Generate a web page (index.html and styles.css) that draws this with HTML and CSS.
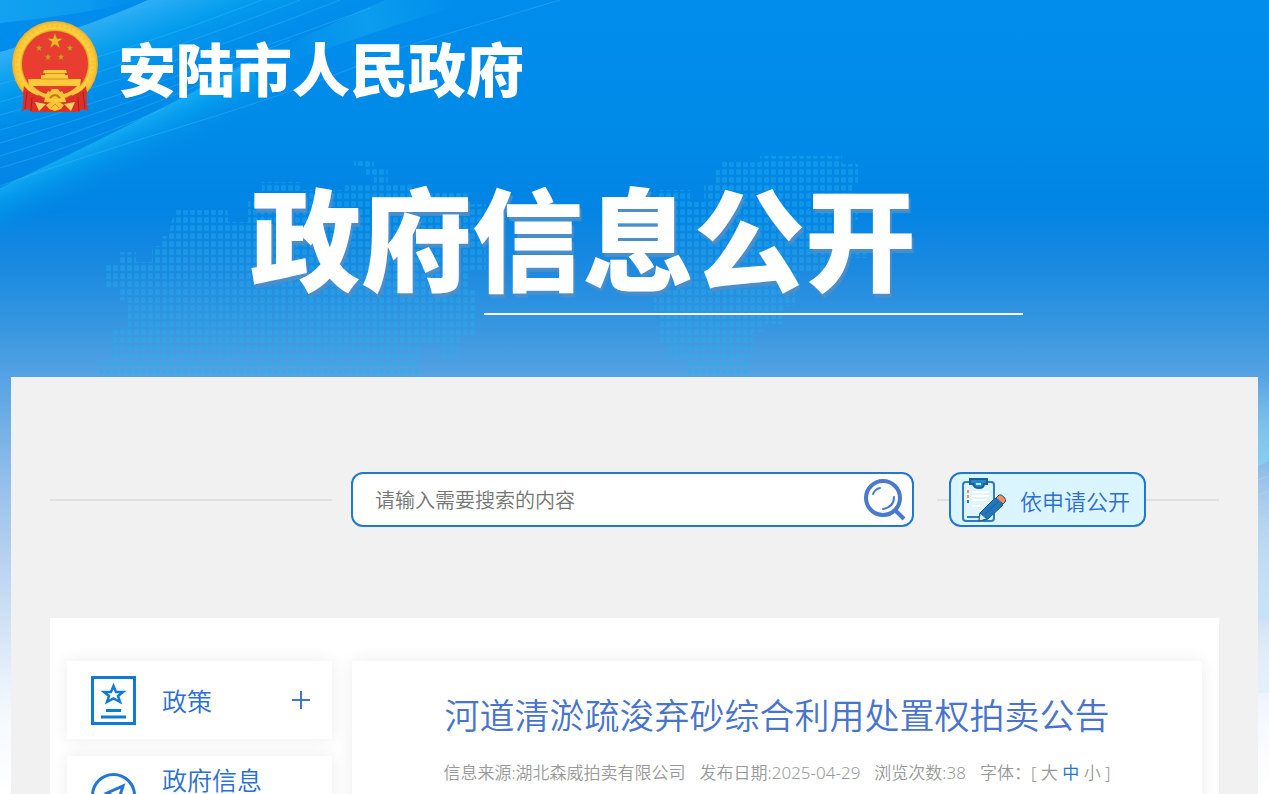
FILE: index.html
```html
<!DOCTYPE html>
<html lang="zh-CN">
<head>
    <meta charset="UTF-8">
    <meta name="viewport" content="width=device-width, initial-scale=1.0">
    <title>河道清淤疏浚弃砂综合利用处置权拍卖公告</title>
    <link rel="stylesheet" href="styles.css">
</head>
<body>
    <!-- Page background: light bands and dotted map -->
    <svg class="page-bg" viewBox="0 0 1269 794" preserveAspectRatio="xMidYMin slice" aria-hidden="true">
        <defs>
            <linearGradient id="wedge" x1="0" y1="0" x2="1" y2="0">
                <stop offset="0" stop-color="#12a2f0"/>
                <stop offset=".6" stop-color="#10a0f0" stop-opacity=".7"/>
                <stop offset="1" stop-color="#0890ee" stop-opacity="0"/>
            </linearGradient>
            <linearGradient id="band" gradientUnits="userSpaceOnUse" x1="95" y1="18" x2="128" y2="108">
                <stop offset="0" stop-color="#34b2f5" stop-opacity=".95"/>
                <stop offset=".4" stop-color="#04a0ee" stop-opacity=".8"/>
                <stop offset="1" stop-color="#0088e8" stop-opacity=".1"/>
            </linearGradient>
            <linearGradient id="edge" gradientUnits="userSpaceOnUse" x1="100" y1="136" x2="122" y2="182">
                <stop offset="0" stop-color="#18b0f4" stop-opacity=".9"/>
                <stop offset=".4" stop-color="#04a0ee" stop-opacity=".6"/>
                <stop offset="1" stop-color="#0488e6" stop-opacity="0"/>
            </linearGradient>
            <linearGradient id="edgeTop" gradientUnits="userSpaceOnUse" x1="280" y1="60" x2="460" y2="0">
                <stop offset="0" stop-color="#10a4f0" stop-opacity="0"/>
                <stop offset=".5" stop-color="#10a4f0" stop-opacity=".7"/>
                <stop offset="1" stop-color="#10a4f0" stop-opacity="0"/>
            </linearGradient>
            <linearGradient id="side1" x1="0" y1="0" x2="0" y2="1">
                <stop offset="0" stop-color="#86ceef" stop-opacity="0"/>
                <stop offset="1" stop-color="#86ceef"/>
            </linearGradient>
            <linearGradient id="side2" x1="0" y1="0" x2="0" y2="1">
                <stop offset="0" stop-color="#c6e2f4" stop-opacity="0"/>
                <stop offset="1" stop-color="#c6e2f4"/>
            </linearGradient>
            <linearGradient id="side3" x1="0" y1="0" x2="0" y2="1">
                <stop offset="0" stop-color="#e2f0f8" stop-opacity="0"/>
                <stop offset="1" stop-color="#e2f0f8"/>
            </linearGradient>
            <pattern id="dots" width="7" height="8" patternUnits="userSpaceOnUse">
                <rect x="1" y="1" width="5" height="6" rx="2" fill="#25b0ec"/>
            </pattern>
        </defs>
        <path d="M0 0H145Q75 16 0 23Z" fill="url(#wedge)"/>
        <path d="M0 52Q85 28 148 0H395Q330 24 250 62Q130 126 0 187Z" fill="url(#band)"/>
        <path d="M0 188Q130 126 250 62L280 130Q120 170 0 250Z" fill="url(#edge)"/>
        <path d="M240 67Q330 24 385 0H480Q400 22 290 62Z" fill="url(#edgeTop)"/>
        <g fill="none" stroke="#5cc4f8" stroke-opacity=".3">
            <path d="M0 84Q130 52 262 0"/>
            <path d="M0 102Q140 62 300 0"/>
            <path d="M0 115Q150 74 340 0"/>
            <path d="M0 130Q160 86 370 8"/>
            <path d="M0 143Q150 100 290 40"/>
            <path d="M0 156Q130 118 250 62"/>
            <path d="M0 168Q90 142 165 108"/>
            <path d="M0 186Q60 164 190 124T400 48L560 0"/>
        </g>
        <g fill="url(#dots)" opacity=".4">
            <path d="M175 210H228V222H248V200H262V182H300V190H345V184H410L422 192H470V204H486V270H470V290H476V336H460V360H440V344H422V376H98V360H112V328H128V300H120V288H106V264H120V252H136V262H152V246H160V236H168Z"/>
            <path d="M354 160H374V168H388V184H374V176H366V166H354Z"/>
            <path d="M760 156H842V164H858V184H852V200H858V220H850V250H868V258H838V272H800V290H795V306H785V324H765V332H753V360H748V376H687V362H668V344H660V312H654V290H676V216H658V190H690V202H704V184H716V170H722V162H760Z"/>
        </g>
        <!-- Right edge -->
        <path d="M1258 377H1269V461L1258 466Z" fill="url(#side1)"/>
        <path d="M1258 466L1269 461V618L1258 621Z" fill="url(#side2)"/>
        <path d="M1258 621L1269 618V693H1258Z" fill="url(#side3)"/>
        <path d="M1258 480L1269 476M1258 495L1269 491M1258 508L1269 504M1258 522L1269 518M1258 538L1269 534" stroke="#b5d6f0" stroke-opacity=".6"/>
    </svg>

    <!-- Header -->
    <header class="header">
        <a class="brand" href="#">
            <svg class="emblem" viewBox="0 0 86 92" aria-hidden="true">
                <defs>
                    <radialGradient id="gold" cx=".5" cy=".5" r=".5">
                        <stop offset=".76" stop-color="#d99a1c"/>
                        <stop offset=".82" stop-color="#ffd23f"/>
                        <stop offset=".93" stop-color="#fbc735"/>
                        <stop offset="1" stop-color="#e9a826"/>
                    </radialGradient>
                    <path id="star" d="M0-8L2-2.5 8-2.5 3 1 5 7 0 3.4-5 7-3 1-8-2.5-2-2.5Z"/>
                </defs>
                <ellipse cx="43" cy="43" rx="43" ry="43" fill="url(#gold)"/>
                <circle cx="43" cy="43" r="38" fill="none" stroke="#e8a428" stroke-width="3" stroke-dasharray="2 3" opacity=".25"/>
                <circle cx="43" cy="43" r="33" fill="#e93d31"/>
                <use href="#star" transform="translate(43 20)" fill="#efb62d" stroke="#b96b17" stroke-width=".6"/>
                <g fill="#d59822" stroke="#a85c18" stroke-width=".6">
                    <use href="#star" transform="translate(27 27) scale(.48)"/>
                    <use href="#star" transform="translate(58 27) scale(.48)"/>
                    <use href="#star" transform="translate(36 36) scale(.48)"/>
                    <use href="#star" transform="translate(49 36) scale(.48)"/>
                </g>
                <path d="M32 49H54L55 52H53V54H56V58H69L68 65H17L16 58H29V54H33V52H31Z" fill="#fcca3a"/>
                <path d="M33 52.500H53M29 58H57" stroke="#d7921d" stroke-width="1"/>
                <path d="M12 65Q18 73 33 77L29 91H19L16 88 10 90Q12 79 11 72ZM74 65Q68 73 53 77L57 91H67L70 88 76 90Q74 79 75 72Z" fill="#dc3028"/>
                <path d="M15 71L13 88M20 76L19 90M71 71L73 88M66 76L67 90" stroke="#ad211f" stroke-width="1"/>
                <path d="M22 66Q35 66 43 71Q51 66 64 66L59 76 48 77 43 74 38 77 27 76Z" fill="#e03a2e"/>
                <path d="M17 65Q23 75 38 78L37 74Q26 71 20 64ZM69 65Q63 75 48 78L49 74Q60 71 66 64Z" fill="#fac439"/>
                <path d="M33 75L36 70 38 71 40 68H46L48 71 50 70 53 75 49 78H37Z" fill="#fac439"/>
                <path d="M38 77Q43 71 48 77" fill="none" stroke="#c9761c" stroke-width="2"/>
                <path d="M24 79Q43 85 62 79L56 91H30Z" fill="#d83128"/>
                <path d="M23 81L34 83 27 90ZM63 81L52 83 59 90Z" fill="#f8d05b"/>
                <path d="M34 84L39 81H47L52 84 49 88 43 90 37 88Z" fill="#fac439"/>
                <path d="M39 87L43 83 47 87" fill="none" stroke="#d8951f"/>
            </svg>
            <span class="brand-name">安陆市人民政府</span>
        </a>
        <h1 class="banner-title">政府信息公开</h1>
    </header>

    <main class="container">
        <!-- Search -->
        <div class="search-row">
            <span class="rule"></span>
            <form class="search-box">
                <input type="text" class="search-input" placeholder="请输入需要搜索的内容" aria-label="搜索">
                <button type="button" class="search-btn" aria-label="搜索">
                    <svg viewBox="0 0 42 42" fill="none" stroke="#4a79d0" aria-hidden="true">
                        <circle cx="19" cy="19" r="17" stroke-width="4"/>
                        <path d="M31 31L40 40" stroke-width="4"/>
                        <path d="M9 15Q11 10 16 9M30 18Q30 28 19 30" stroke-width="2" stroke-linecap="round"/>
                    </svg>
                </button>
            </form>
            <div class="apply">
                <a class="apply-btn" href="#">
                    <svg class="apply-icon" viewBox="0 0 44 44" aria-hidden="true">
                        <rect x="1" y="4" width="31" height="39" rx="3" fill="#d8f1fb" stroke="#2f7db8" stroke-width="2"/>
                        <rect x="4" y="7" width="25" height="33" fill="#e0f4fb"/>
                        <path d="M10 14H27M10 18H27M10 22H25M10 28H18" stroke="#fff" stroke-width="2"/>
                        <path d="M6 12V15M6 17V20" stroke="#f58c5d" stroke-width="2"/>
                        <path d="M6 22V25" stroke="#2f7db8" stroke-width="2"/>
                        <path d="M8 1H25V6H22Q22 10 17 10T11 6H8Z" fill="#2b85c6" stroke="#14639f" stroke-width="2"/>
                        <path d="M14 6H19" stroke="#bce6f7" stroke-width="2"/>
                        <path d="M18 35L33 20 41 27 26 41 17 43Z" fill="#2378bd" stroke="#155b94" stroke-width="1"/>
                        <path d="M34 20L37 17Q39 16 42 19T43 24L41 26Z" fill="#f58c5d" stroke="#155b94"/>
                        <path d="M18 35L25 41 17 43Z" fill="#d8f1fb" stroke="#155b94"/>
                        <path d="M5 39H17" stroke="#2f7db8" stroke-width="2"/>
                        <path d="M23 36L36 24" stroke="#165c98"/>
                    </svg>
                    <span>依申请公开</span>
                </a>
            </div>
        </div>

        <div class="panel">
            <!-- Side menu -->
            <nav class="side-menu">
                <a class="side-item" href="#">
                    <svg class="side-icon" viewBox="0 0 45 49" fill="none" stroke="#0f7ad8" aria-hidden="true">
                        <rect x="1.500" y="1.500" width="42" height="46" stroke-width="3"/>
                        <path d="M22.500 10L25 16H32L27 20 29 26 22.500 22.500 16 26 18 20 13 16H20Z" stroke-width="2.500"/>
                        <path d="M15 34.500H30M10 41H35" stroke-width="3"/>
                    </svg>
                    <span class="side-label">政策</span>
                    <svg class="side-plus" viewBox="0 0 18 18" stroke="#4673cd" stroke-width="2" aria-hidden="true">
                        <path d="M0 9H18M9 0V18"/>
                    </svg>
                </a>
                <a class="side-item side-item-tall" href="#">
                    <svg class="side-icon" viewBox="0 0 45 45" fill="none" stroke="#2277d4" stroke-width="3" aria-hidden="true">
                        <circle cx="22.500" cy="22.500" r="21"/>
                        <path d="M32 13L26 32 22 23 16 20Z"/>
                    </svg>
                    <span class="side-label">政府信息</span>
                </a>
            </nav>

            <!-- Article -->
            <article class="article">
                <h2 class="article-title">河道清淤疏浚弃砂综合利用处置权拍卖公告</h2>
                <div class="article-meta">
                    <span>信息来源:湖北森威拍卖有限公司</span>
                    <span>发布日期:2025-04-29</span>
                    <span>浏览次数:38</span>
                    <span class="font-size">字体：[
                        <a href="#">大</a>
                        <a href="#" class="active">中</a>
                        <a href="#">小</a>
                        ]</span>
                </div>
            </article>
        </div>
    </main>
</body>
</html>
```
FILE: styles.css
```css
:root {
    --primary: #1f78d1;
    --link: #2b6fd0;
    --title: #4874cc;
    --gray: #999;
    --card-shadow: 0 0 16px rgba(0, 0, 0, 0.08);
}

* {
    box-sizing: border-box;
}

body {
    margin: 0;
    height: 100vh;
    overflow: hidden;
    font-family: "Noto Sans CJK SC", sans-serif;
    font-weight: 350;
    background: linear-gradient(180deg, #008dec 0, #008ae8 140px, #0284e4 210px, #1a89e0 265px, #3696e0 325px, #55a2e3 376px, #9ec4ec 500px, #c8dcf3 600px, #f4f8fd 710px, #fff 794px);
}

a {
    color: inherit;
    text-decoration: none;
}

.page-bg {
    position: absolute;
    top: 0;
    left: 0;
    width: 100%;
    height: 100%;
    z-index: -1;
}

/* Header */
.header {
    height: 377px;
    padding: 21px 12px 0;
}

.brand {
    display: flex;
    align-items: center;
    gap: 20px;
    color: #fff;
}

.emblem {
    width: 86px;
    height: 92px;
}

.brand-name {
    font-size: 58px;
    font-weight: 900;
    line-height: 92px;
}

.banner-title {
    position: relative;
    width: 773px;
    margin: 46px 0 0 238px;
    font-size: 111px;
    font-weight: 900;
    line-height: 152px;
    color: #fff;
    text-shadow: 2px 4px 1px #4a8ecb;
}

.banner-title::after {
    content: "";
    position: absolute;
    right: 0;
    bottom: -4px;
    width: 539px;
    height: 2px;
    background: #fff;
}

/* Search */
.container {
    margin: 0 11px;
    padding: 95px 39px 0;
    background: #f1f1f1;
}

.search-row {
    display: grid;
    grid-template-columns: 282fr 605fr 282fr;
    align-items: center;
}

.rule,
.apply::before,
.apply::after {
    content: "";
    height: 2px;
    background: #e0e0e0;
}

.search-box {
    display: flex;
    align-items: center;
    height: 55px;
    margin: 0 23px 0 19px;
    padding: 0 6px 0 22px;
    border: 2px solid var(--primary);
    border-radius: 12px;
    background: #fff;
}

.search-input {
    flex: 1;
    min-width: 0;
    padding: 0;
    border: none;
    outline: none;
    background: transparent;
    font: inherit;
    font-size: 20px;
}

.search-input::placeholder {
    color: #757575;
}

.search-btn {
    width: 42px;
    height: 42px;
    padding: 0;
    border: none;
    background: none;
    cursor: pointer;
}

.search-btn svg {
    display: block;
}

.apply {
    display: flex;
    align-items: center;
}

.apply::before {
    width: 12px;
}

.apply::after {
    flex: 1;
}

.apply-btn {
    display: flex;
    align-items: center;
    gap: 14px;
    height: 55px;
    padding: 0 14px 0 11px;
    border: 2px solid var(--primary);
    border-radius: 12px;
    background: #dbf5ff;
    color: var(--link);
    font-size: 22px;
    white-space: nowrap;
}

.apply-icon {
    width: 44px;
    height: 44px;
}

/* Content panel */
.panel {
    display: flex;
    align-items: stretch;
    gap: 20px;
    min-height: 260px;
    margin-top: 91px;
    padding: 43px 17px 0;
    background: #fff;
}

.side-menu {
    display: flex;
    flex-direction: column;
    gap: 17px;
    width: 265px;
}

.side-item {
    display: flex;
    align-items: center;
    height: 78px;
    padding: 0 22px 0 24px;
    background: #fff;
    box-shadow: var(--card-shadow);
    color: var(--link);
}

.side-icon {
    width: 45px;
    margin-right: 26px;
}

.side-label {
    flex: 1;
    font-size: 25px;
    line-height: 46px;
}

.side-item-tall .side-label {
    align-self: flex-start;
}

.side-plus {
    width: 18px;
    height: 18px;
}

/* Article */
.article {
    flex: 1;
    background: #fff;
    box-shadow: var(--card-shadow);
    text-align: center;
}

.article-title {
    margin: 28px 0 0;
    font-size: 35px;
    font-weight: 350;
    line-height: 50px;
    color: var(--title);
}

.article-meta {
    display: flex;
    justify-content: center;
    gap: 14px;
    margin-top: 21px;
    font-family: "Noto Sans", "Noto Sans CJK SC", sans-serif;
    font-size: 17px;
    line-height: 26px;
    color: var(--gray);
    white-space: nowrap;
}

.font-size .active {
    color: var(--primary);
    font-weight: 400;
}
```
